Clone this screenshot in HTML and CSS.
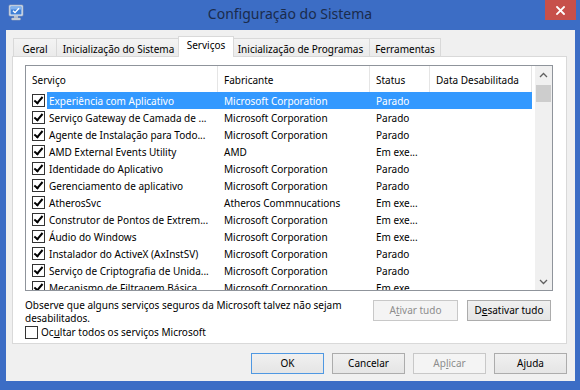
FILE: index.html
```html
<!DOCTYPE html>
<html lang="pt-BR">
<head>
<meta charset="utf-8">
<title>Configuração do Sistema</title>
<link rel="stylesheet" href="styles.css">
</head>
<body>
<div class="window">
  <div class="titlebar">
    <div class="tb-left">
      <svg class="app-icon" width="16" height="17" viewBox="0 0 16 17">
        <rect x="1" y="1" width="14" height="11" rx="1" fill="#e8eef6" stroke="#8a9bb5" stroke-width="0.8"/>
        <rect x="2.5" y="2.5" width="11" height="8" fill="#3f7fd6"/>
        <rect x="2.5" y="2.5" width="11" height="3" fill="#7fb0ee"/>
        <polyline points="5,6.8 7,8.6 11,4.2" fill="none" stroke="#ffffff" stroke-width="1.4"/>
        <rect x="6" y="12" width="4" height="2" fill="#b9c3d1"/>
        <rect x="3.5" y="14" width="9" height="2" rx="0.8" fill="#d9dee6" stroke="#9aa6b8" stroke-width="0.6"/>
      </svg>
    </div>
    <div class="title">Configuração do Sistema</div>
    <div class="tb-right">
      <div class="close">
        <svg width="9" height="9" viewBox="0 0 9 9"><path d="M1 1 L8 8 M8 1 L1 8" stroke="#fff" stroke-width="1.8" stroke-linecap="square"/></svg>
      </div>
    </div>
  </div>

  <div class="client">
    <div class="tabs">
      <div class="tab t-geral">Geral</div>
      <div class="tab t-sistema">Inicialização do Sistema</div>
      <div class="tab t-servicos active">Serviços</div>
      <div class="tab t-programas">Inicialização de Programas</div>
      <div class="tab t-ferramentas">Ferramentas</div>
    </div>

    <div class="panel">
      <div class="list">
        <div class="list-main">
          <div class="list-header">
            <span class="h1">Serviço</span>
            <span class="h2">Fabricante</span>
            <span class="h3">Status</span>
            <span class="h4">Data Desabilitada</span>
          </div>
          <div class="list-body">
            <div class="row selected"><span class="check-cell"><span class="cb checked"></span></span><div class="cells"><span class="c1">Experiência com Aplicativo</span><span class="c2">Microsoft Corporation</span><span class="c3">Parado</span><span class="c4"></span></div></div>
            <div class="row"><span class="check-cell"><span class="cb checked"></span></span><div class="cells"><span class="c1">Serviço Gateway de Camada de ...</span><span class="c2">Microsoft Corporation</span><span class="c3">Parado</span><span class="c4"></span></div></div>
            <div class="row"><span class="check-cell"><span class="cb checked"></span></span><div class="cells"><span class="c1">Agente de Instalação para Todo...</span><span class="c2">Microsoft Corporation</span><span class="c3">Parado</span><span class="c4"></span></div></div>
            <div class="row"><span class="check-cell"><span class="cb checked"></span></span><div class="cells"><span class="c1">AMD External Events Utility</span><span class="c2">AMD</span><span class="c3">Em exe...</span><span class="c4"></span></div></div>
            <div class="row"><span class="check-cell"><span class="cb checked"></span></span><div class="cells"><span class="c1">Identidade do Aplicativo</span><span class="c2">Microsoft Corporation</span><span class="c3">Parado</span><span class="c4"></span></div></div>
            <div class="row"><span class="check-cell"><span class="cb checked"></span></span><div class="cells"><span class="c1">Gerenciamento de aplicativo</span><span class="c2">Microsoft Corporation</span><span class="c3">Parado</span><span class="c4"></span></div></div>
            <div class="row"><span class="check-cell"><span class="cb checked"></span></span><div class="cells"><span class="c1">AtherosSvc</span><span class="c2">Atheros Commnucations</span><span class="c3">Em exe...</span><span class="c4"></span></div></div>
            <div class="row"><span class="check-cell"><span class="cb checked"></span></span><div class="cells"><span class="c1">Construtor de Pontos de Extrem...</span><span class="c2">Microsoft Corporation</span><span class="c3">Em exe...</span><span class="c4"></span></div></div>
            <div class="row"><span class="check-cell"><span class="cb checked"></span></span><div class="cells"><span class="c1">Áudio do Windows</span><span class="c2">Microsoft Corporation</span><span class="c3">Em exe...</span><span class="c4"></span></div></div>
            <div class="row"><span class="check-cell"><span class="cb checked"></span></span><div class="cells"><span class="c1">Instalador do ActiveX (AxInstSV)</span><span class="c2">Microsoft Corporation</span><span class="c3">Parado</span><span class="c4"></span></div></div>
            <div class="row"><span class="check-cell"><span class="cb checked"></span></span><div class="cells"><span class="c1">Serviço de Criptografia de Unida...</span><span class="c2">Microsoft Corporation</span><span class="c3">Parado</span><span class="c4"></span></div></div>
            <div class="row"><span class="check-cell"><span class="cb checked"></span></span><div class="cells"><span class="c1">Mecanismo de Filtragem Básica</span><span class="c2">Microsoft Corporation</span><span class="c3">Em exe...</span><span class="c4"></span></div></div>
          </div>
        </div>
        <div class="scrollbar">
          <div class="sb-btn"><svg width="9" height="6" viewBox="0 0 9 6"><polyline points="1,5 4.5,1.5 8,5" fill="none" stroke="#606060" stroke-width="1.3"/></svg></div>
          <div class="sb-thumb"></div>
          <div class="sb-track"></div>
          <div class="sb-btn down"><svg width="9" height="6" viewBox="0 0 9 6"><polyline points="1,1 4.5,4.5 8,1" fill="none" stroke="#606060" stroke-width="1.3"/></svg></div>
        </div>
      </div>

      <div class="note-row">
        <p class="note">Observe que alguns serviços seguros da Microsoft talvez não sejam<br>desabilitados.</p>
        <div class="note-buttons">
          <button class="btn btn-enable" disabled>A<u>t</u>ivar tudo</button>
          <button class="btn btn-disable">D<u>e</u>sativar tudo</button>
        </div>
      </div>

      <label class="hide-ms"><span class="cb"></span><span>Oc<u>u</u>ltar todos os serviços Microsoft</span></label>
    </div>

    <div class="dialog-buttons">
      <button class="btn dlg default">OK</button>
      <button class="btn dlg">Cancelar</button>
      <button class="btn dlg" disabled>Ap<u>l</u>icar</button>
      <button class="btn dlg">Ajuda</button>
    </div>
  </div>
</div>
</body>
</html>
```

FILE: styles.css
```css
* { box-sizing: border-box; }

html, body {
  margin: 0;
  padding: 0;
}

body {
  width: 580px;
  height: 390px;
  overflow: hidden;
  background: #3c6dc5;
  font-family: "Noto Sans", "Open Sans", sans-serif;
  font-size: 10px;
  color: #000;
}

.window {
  width: 580px;
  height: 390px;
  display: flex;
  flex-direction: column;
  background: #3c6dc5;
}

/* ---------- title bar ---------- */
.titlebar {
  height: 30px;
  display: grid;
  grid-template-columns: 1fr auto 1fr;
  align-items: start;
}

.tb-left {
  padding: 4px 0 0 8px;
}

.app-icon { display: block; }

.title {
  font-size: 14px;
  line-height: 28px;
  color: #1a2b4c;
  white-space: nowrap;
}

.tb-right {
  display: flex;
  justify-content: flex-end;
  padding-right: 4px;
}

.close {
  width: 31px;
  height: 20px;
  background: #c7504b;
  display: flex;
  align-items: center;
  justify-content: center;
}

.close svg { display: block; }

/* ---------- client ---------- */
.client {
  flex: 1;
  margin: 0 5px 9px 6px;
  background: #f0f0f0;
  padding: 6px 8px 0 6px;
  display: flex;
  flex-direction: column;
}

/* ---------- tabs ---------- */
.tabs {
  height: 20px;
  display: flex;
  align-items: flex-end;
  padding-left: 1px;
}

.tab {
  height: 18px;
  line-height: 20px;
  border: 1px solid #d9d9d9;
  border-bottom: 0;
  margin-right: -1px;
  background: linear-gradient(#f3f3f3, #ebebeb);
  white-space: nowrap;
  text-align: center;
}

.t-geral { width: 44px; }
.t-sistema { width: 125px; }
.t-servicos { width: 56px; }
.t-programas { width: 139px; }
.t-ferramentas { width: 72px; }

.tab.active {
  position: relative;
  z-index: 1;
  height: 21px;
  line-height: 17px;
  background: #fff;
  margin-left: -2px;
  margin-right: -3px;
  margin-bottom: -1px;
}

/* ---------- panel ---------- */
.panel {
  border: 1px solid #d9d9d9;
  background: #fff;
  padding: 8px 13px 4px 12px;
  display: flex;
  flex-direction: column;
}

/* list view */
.list {
  height: 226px;
  border: 1px solid #8f949b;
  display: flex;
  background: #fff;
  overflow: hidden;
}

.list-main {
  width: 509px;
  overflow: hidden;
}

.list-header {
  display: flex;
  height: 26px;
  line-height: 29px;
}

.list-header span {
  padding-left: 6px;
  border-right: 1px solid #e5e5e5;
  white-space: nowrap;
  overflow: hidden;
}

.h1 { width: 192px; }
.h2 { width: 152px; }
.h3 { width: 60px; }
.h4 { width: 102px; }

.list-body {
  height: 198px;
  overflow: hidden;
}

.row {
  height: 17px;
  display: flex;
  line-height: 19px;
}

.check-cell {
  width: 21px;
  padding-left: 6px;
  display: flex;
  align-items: center;
}

.cells {
  display: flex;
  width: 485px;
  height: 17px;
  overflow: hidden;
}

.cells span {
  white-space: nowrap;
  overflow: hidden;
  padding-left: 6px;
}

.cells .c1 { width: 171px; padding-left: 2px; }
.cells .c2 { width: 152px; }
.cells .c3 { width: 60px; }
.cells .c4 { width: 102px; }

.row.selected .cells {
  background: #3399ff;
  color: #fff;
}

/* checkbox */
.cb {
  width: 13px;
  height: 13px;
  flex: none;
  border: 1px solid #333;
  background: #fff;
  display: flex;
  align-items: center;
  justify-content: center;
}

.cb.checked::after {
  content: "";
  width: 3px;
  height: 7px;
  border-right: 2px solid #000;
  border-bottom: 2px solid #000;
  transform: translateY(-1px) rotate(40deg);
}

/* scrollbar */
.scrollbar {
  width: 17px;
  background: #f0f0f0;
  display: flex;
  flex-direction: column;
}

.sb-btn {
  height: 18px;
  display: flex;
  align-items: center;
  justify-content: center;
}

.sb-btn.down { height: 17px; }

.sb-btn svg { display: block; }

.sb-thumb {
  height: 17px;
  margin: 1px 1px 0;
  background: #cdcdcd;
}

.sb-track { flex: 1; }

/* note + buttons */
.note-row {
  margin-top: 8px;
  display: flex;
  justify-content: space-between;
  align-items: flex-start;
}

.note {
  margin: 0;
  line-height: 13px;
  white-space: nowrap;
}

.note-buttons {
  display: flex;
  gap: 9px;
  margin-top: 1px;
  margin-right: 2px;
}

.btn {
  height: 21px;
  padding: 0;
  font-family: inherit;
  font-size: 10px;
  color: #000;
  border: 1px solid #acacac;
  background: linear-gradient(#f0f0f0, #e5e5e5);
  line-height: 19px;
}

.btn:disabled {
  color: #8d8d8d;
  border-color: #c8c8c8;
  background: #f4f4f4;
}

.btn-enable { width: 85px; }
.btn-disable { width: 84px; }

.hide-ms {
  margin-top: 1px;
  display: flex;
  align-items: center;
  gap: 3px;
  height: 13px;
  line-height: 13px;
}

/* dialog buttons */
.dialog-buttons {
  margin-top: 9px;
  display: flex;
  justify-content: flex-end;
  gap: 8px;
}

.dlg { width: 73px; }

.dlg.default {
  border-color: #4f98e2;
}
```
